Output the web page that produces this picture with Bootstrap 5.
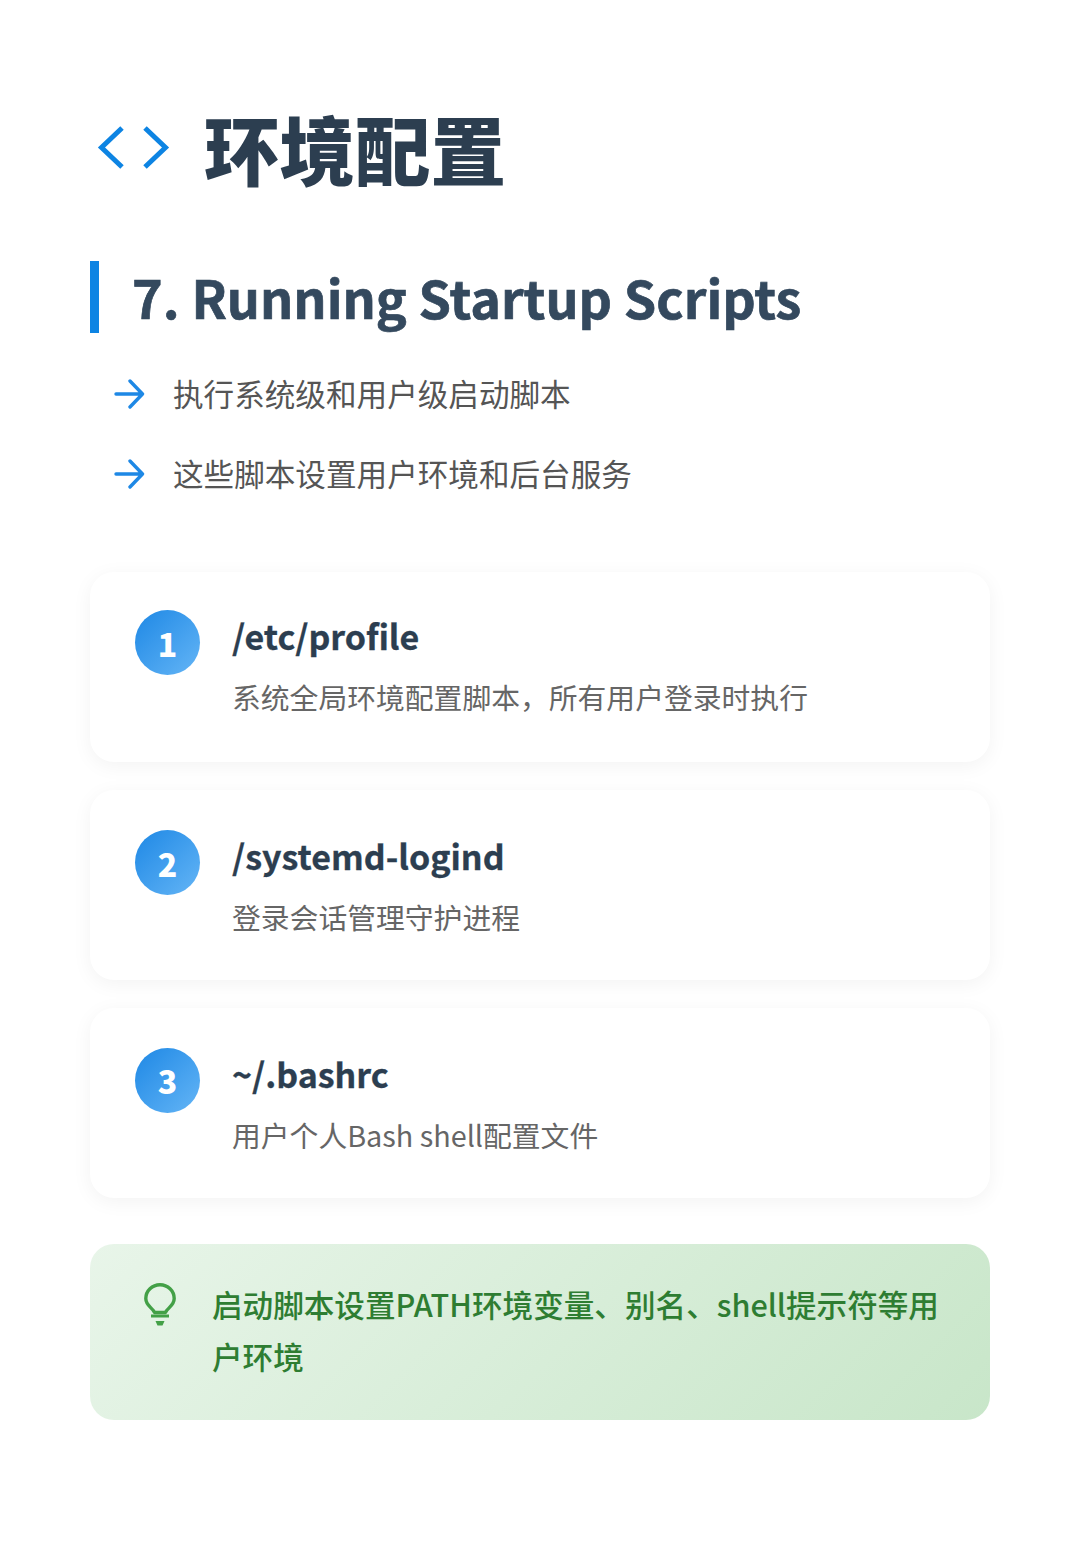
<!DOCTYPE html>
<html lang="zh">
<head>
<meta charset="utf-8">
<title>环境配置</title>
<link rel="stylesheet" href="https://cdn.jsdelivr.net/npm/bootstrap@5.3.0/dist/css/bootstrap.min.css">
<style>
html,body{background:#fff;}
body{font-family:"Noto Sans CJK SC","Noto Sans",sans-serif;width:1080px;height:1546px;overflow:hidden;}
.sheet{padding:99px 90px 0;}
.title-row{height:96px;gap:33px;padding-left:7px;}
.main-title{font-size:75.5px;font-weight:900;line-height:96px;color:#2c3e50;margin:0;}
.sub-title{margin:66px 0 0;border-left:9px solid #0d84e3;padding-left:33px;height:72px;font-size:52px;line-height:72px;font-weight:700;color:#34495e;-webkit-text-stroke:.7px #34495e;}
.point-list{margin:21px 0 0;padding:0 0 0 24px;list-style:none;}
.point-list li{height:80px;gap:28px;font-size:30.6px;color:#555;}
.step-list{margin-top:58px;gap:28px;}
.step-box{height:190px;border-radius:24px;padding:38px 45px;gap:33px;background:#fff;box-shadow:0 4px 20px rgba(0,0,0,.05);}
.step-box:nth-child(2){padding-top:40px;}
.step-box:nth-child(3){padding-top:39.500px;}
.step-num{width:65px;height:65px;flex:none;font-size:32px;font-weight:900;color:#fff;background:linear-gradient(135deg,#1e88e5,#64b5f6);}
.step-name{font-size:34px;line-height:52px;font-weight:700;color:#2c3e50;margin:0 0 0 -1px;-webkit-text-stroke:.3px #2c3e50;}
.step-desc{font-size:28.8px;line-height:44px;color:#666;margin:13px 0 0 -1px;}
.tip-box{margin-top:46px;height:176px;border-radius:24px;padding:36px 50px 0 54px;gap:36px;background:linear-gradient(135deg,#e8f5e9,#c8e6c9);}
.tip-text{font-size:30.6px;line-height:52px;font-weight:500;color:#2e7d32;margin-top:-2px;}
.tip-icon{margin-top:3px;}
</style>
</head>
<body>
<div class="sheet">
  <div class="title-row d-flex align-items-center">
    <svg width="74" height="46" viewBox="0 0 74 46" fill="none" stroke="#0d84e3" stroke-width="5"><path d="M25 4 4.500 23.500 25 43M48 4 68.500 23.500 48 43"/></svg>
    <h1 class="main-title">环境配置</h1>
  </div>
  <h2 class="sub-title">7. Running Startup Scripts</h2>
  <ul class="point-list">
    <li class="d-flex align-items-center"><svg width="31" height="30" viewBox="0 0 31 30" fill="none" stroke="#1e88e5" stroke-width="3.4" stroke-linecap="round" stroke-linejoin="round"><path d="M2 15H28M16 2 28.500 15 16 28"/></svg><span>执行系统级和用户级启动脚本</span></li>
    <li class="d-flex align-items-center"><svg width="31" height="30" viewBox="0 0 31 30" fill="none" stroke="#1e88e5" stroke-width="3.4" stroke-linecap="round" stroke-linejoin="round"><path d="M2 15H28M16 2 28.500 15 16 28"/></svg><span>这些脚本设置用户环境和后台服务</span></li>
  </ul>
  <div class="step-list d-flex flex-column">
    <div class="step-box d-flex">
      <div class="step-num rounded-circle d-flex align-items-center justify-content-center">1</div>
      <div><p class="step-name">/etc/profile</p><p class="step-desc">系统全局环境配置脚本，所有用户登录时执行</p></div>
    </div>
    <div class="step-box d-flex">
      <div class="step-num rounded-circle d-flex align-items-center justify-content-center">2</div>
      <div><p class="step-name">/systemd-logind</p><p class="step-desc">登录会话管理守护进程</p></div>
    </div>
    <div class="step-box d-flex">
      <div class="step-num rounded-circle d-flex align-items-center justify-content-center">3</div>
      <div><p class="step-name">~/.bashrc</p><p class="step-desc">用户个人Bash shell配置文件</p></div>
    </div>
  </div>
  <div class="tip-box d-flex">
    <svg class="tip-icon flex-shrink-0" width="32" height="44" viewBox="0 0 32 44" fill="none" stroke="#43a047" stroke-width="3.4"><path d="M10.500 29.500C9 25 1.800 23 1.800 15.600A14.200 13.800 0 0 1 30.200 15.600C30.200 23 23 25 21.500 29.500Z" stroke-linejoin="round"/><path d="M7 33H25" stroke-width="3"/><path d="M11.500 38H20.500L18.500 42.500H13.500Z" fill="#43a047" stroke="none"/></svg>
    <div class="tip-text">启动脚本设置PATH环境变量、别名、shell提示符等用户环境</div>
  </div>
</div>
<script src="https://cdn.jsdelivr.net/npm/bootstrap@5.3.0/dist/js/bootstrap.bundle.min.js"></script>
</body>
</html>
